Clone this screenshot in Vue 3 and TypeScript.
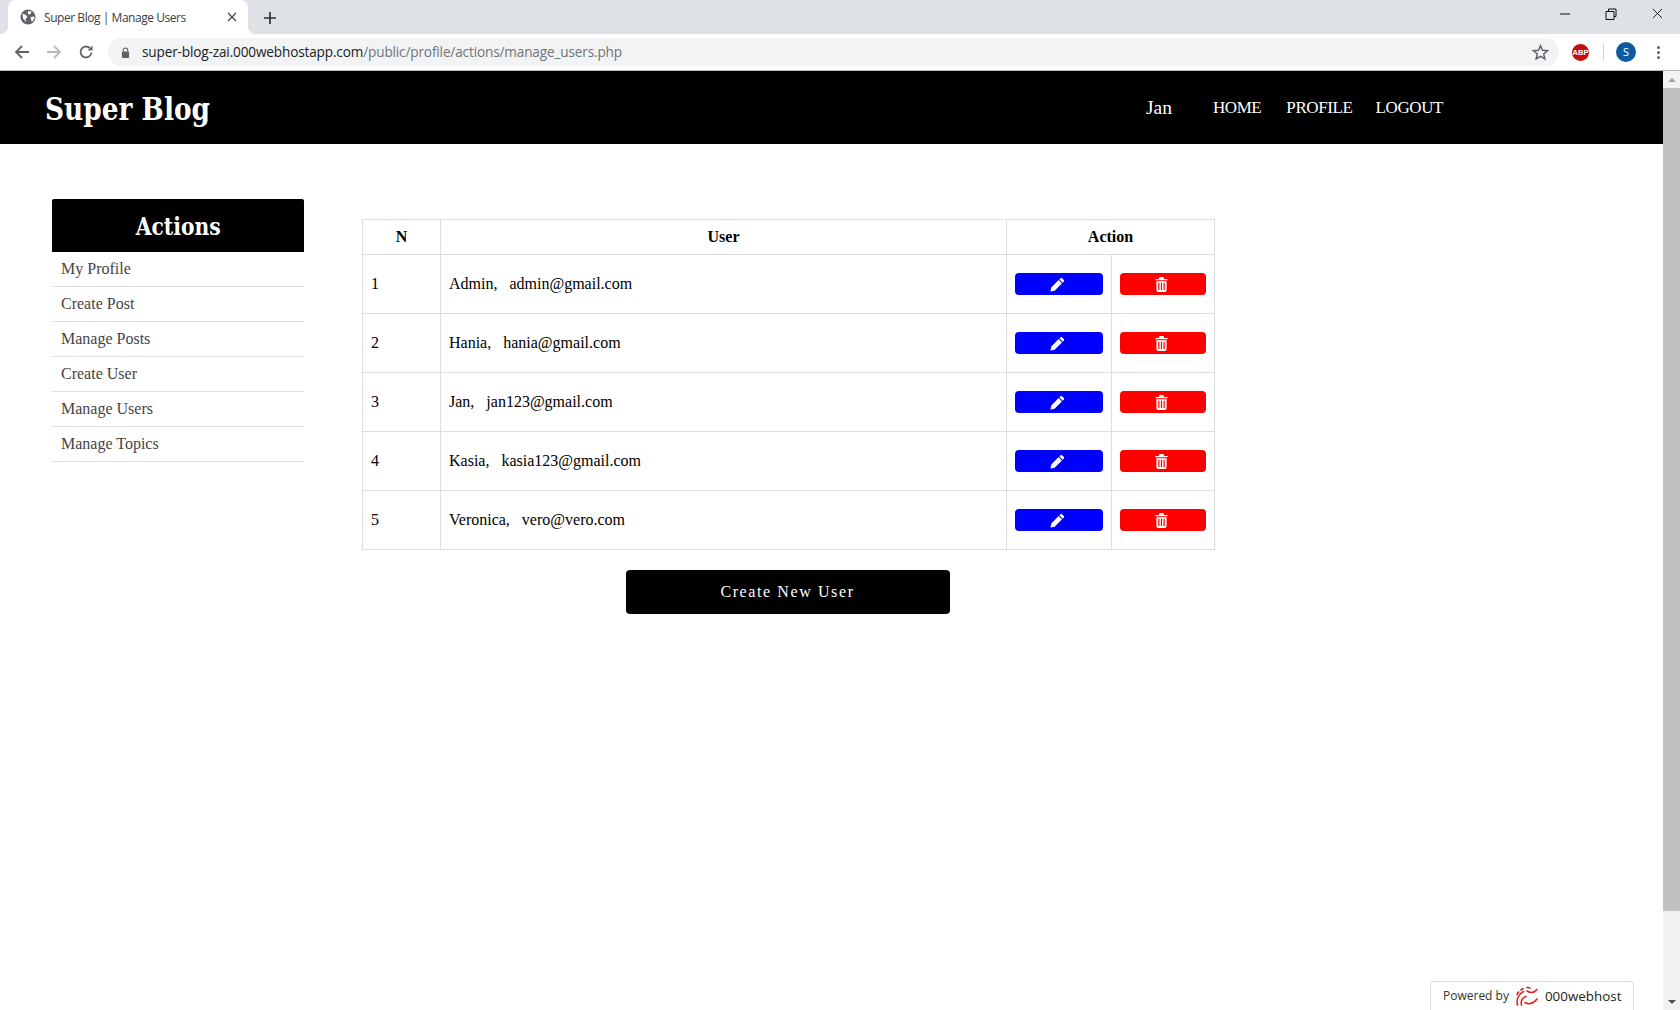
<script setup lang="ts">
interface UserRow { id: number; name: string; email: string }
const users: UserRow[] = [
  { id: 1, name: 'Admin', email: 'admin@gmail.com' },
  { id: 2, name: 'Hania', email: 'hania@gmail.com' },
  { id: 3, name: 'Jan', email: 'jan123@gmail.com' },
  { id: 4, name: 'Kasia', email: 'kasia123@gmail.com' },
  { id: 5, name: 'Veronica', email: 'vero@vero.com' },
]
const actions: string[] = ['My Profile', 'Create Post', 'Manage Posts', 'Create User', 'Manage Users', 'Manage Topics']
</script>

<template>
  <div class="window">
    <div class="tabstrip">
      <div class="tab">
        <svg class="favicon" viewBox="0 0 16 16"><circle cx="8" cy="8" r="7.500" fill="#5f6368"/><path d="M2.500 4.500l3.500 1.500 1.500 2.500-2 1 .5 3.500-3-3.500zM8 2l3.500.5-1 2.500-2.500.5zM10.500 8l3.500-.5.5 2-2.500 3.500-1-2.500z" fill="#fff"/></svg>
        <span class="tab-title">Super Blog | Manage Users</span>
        <svg class="tab-close" viewBox="0 0 10 10"><path d="M1 1l8 8M9 1l-8 8" stroke="#45474a" stroke-width="1.300" fill="none"/></svg>
      </div>
      <svg class="new-tab" viewBox="0 0 12 12"><path d="M6 0v12M0 6h12" stroke="#303236" stroke-width="1.700" fill="none"/></svg>
      <div class="window-controls">
        <svg viewBox="0 0 12 12"><path d="M1 6h10" stroke="#111" stroke-width="1" fill="none"/></svg>
        <svg viewBox="0 0 12 12"><path d="M3.500 3V1h7.500v7.500H9M1 3.500h8v8H1z" stroke="#111" stroke-width="1" fill="none"/></svg>
        <svg viewBox="0 0 12 12"><path d="M1 1l10 10M11 1L1 11" stroke="#111" stroke-width="1" fill="none"/></svg>
      </div>
    </div>
    <div class="toolbar">
      <svg class="nav-icon" viewBox="0 0 16 16"><path d="M15 8H2M8 2L2 8l6 6" stroke="#5f6368" stroke-width="1.800" fill="none"/></svg>
      <svg class="nav-icon" viewBox="0 0 16 16"><path d="M1 8h13M8 2l6 6-6 6" stroke="#b5b7ba" stroke-width="1.800" fill="none"/></svg>
      <svg class="nav-icon" viewBox="0 0 16 16"><path d="M13.500 8.500A5.500 5.500 0 1 1 11.800 4" stroke="#5f6368" stroke-width="1.800" fill="none"/><path d="M14.500 1.500v5h-5z" fill="#5f6368"/></svg>
      <div class="omnibox">
        <svg class="lock" viewBox="0 0 10 12"><path d="M2.500 5V3.500a2.500 2.500 0 0 1 5 0V5" stroke="#5f6368" stroke-width="1.200" fill="none"/><rect x="1" y="5" width="8" height="7" rx="1" fill="#5f6368"/></svg>
        <span class="url"><span class="url-host">super-blog-zai.000webhostapp.com</span>/public/profile/actions/manage_users.php</span>
        <svg class="star" viewBox="0 0 16 16"><path d="M8 1.600l1.900 4.300 4.700.4-3.600 3.100 1.100 4.600L8 11.600l-4.100 2.400 1.100-4.600-3.600-3.100 4.700-.4z" stroke="#5f6368" stroke-width="1.400" fill="none"/></svg>
      </div>
      <div class="abp">ABP</div>
      <div class="tool-sep"></div>
      <div class="avatar">S</div>
      <div class="menu-dots"><i></i><i></i><i></i></div>
    </div>
    <div class="viewport">
      <div class="page">
        <header class="site-header">
          <h1 class="logo">Super Blog</h1>
          <nav class="site-nav">
            <a class="nav-user">Jan</a>
            <a class="nav-home">HOME</a>
            <a>PROFILE</a>
            <a>LOGOUT</a>
          </nav>
        </header>
        <div class="content">
          <aside class="sidebar">
            <h2 class="sidebar-title"><span>Actions</span></h2>
            <a v-for="a in actions" :key="a" class="side-link">{{ a }}</a>
          </aside>
          <main class="main">
            <table class="users">
              <colgroup>
                <col class="col-n" />
                <col class="col-user" />
                <col class="col-edit" />
                <col class="col-del" />
              </colgroup>
              <thead>
                <tr>
                  <th>N</th>
                  <th>User</th>
                  <th colspan="2">Action</th>
                </tr>
              </thead>
              <tbody>
                <tr v-for="u in users" :key="u.id">
                  <td>{{ u.id }}</td>
                  <td>{{ u.name }}, &nbsp; {{ u.email }}</td>
                  <td>
                    <a class="act edit">
                      <svg class="pencil" viewBox="0 0 16 16"><path d="M11.300 1.200a1 1 0 0 1 1.400 0l2.100 2.100a1 1 0 0 1 0 1.400l-1.300 1.300-3.500-3.500zM9.200 3.300l3.500 3.500-7.800 7.800-4 .9-.4-.4.900-4z" fill="#fff"/></svg>
                    </a>
                  </td>
                  <td>
                    <a class="act del">
                      <svg class="trash" viewBox="0 0 14 16"><path fill-rule="evenodd" d="M5 0h4l1 2h3.500v1.500H.5V2H4zM1.500 4.500h11V14a2 2 0 0 1-2 2h-7a2 2 0 0 1-2-2zM3.500 6v8h1.300V6zM6.350 6v8h1.300V6zM9.200 6v8h1.300V6z" fill="#fff"/></svg>
                    </a>
                  </td>
                </tr>
              </tbody>
            </table>
            <a class="create-btn">Create New User</a>
          </main>
        </div>
        <div class="powered">
          <span>Powered by</span>
          <svg class="wh-logo" viewBox="0 0 24 20"><path d="M2.500 19C1 13 4 8 8.500 5.500M6.500 19c-1-4 1-7.500 4.500-8.500M10 16.500c3.500 2.500 9 1 12-3.500M12 5c3 2 7 2 10-1.500M12 1.500l3 .5M8 2.500L6 4M3.500 6L2 8.500" stroke="#d9261c" stroke-width="1.600" fill="none" stroke-linecap="round"/></svg>
          <span class="wh-name">000webhost</span>
        </div>
      </div>
      <div class="scrollbar">
        <div class="sb-btn"><span class="tri-up"></span></div>
        <div class="sb-track"><div class="sb-thumb"></div></div>
        <div class="sb-btn"><span class="tri-down"></span></div>
      </div>
    </div>
  </div>
</template>

<style>
html, body { margin: 0; padding: 0; overflow: hidden; background: #fff; }
</style>

<style scoped>
.window { width: 1680px; height: 1010px; display: flex; flex-direction: column; overflow: hidden; background: #fff; font-family: "Liberation Serif", serif; }

.tabstrip { height: 34px; background: #dee1e6; display: flex; align-items: flex-end; padding-left: 8px; box-sizing: border-box; flex: none; }
.tab { position: relative; width: 240px; height: 34px; background: #fff; border-radius: 8px 8px 0 0; display: flex; align-items: center; padding: 0 10px 0 12px; box-sizing: border-box; }
.tab::before, .tab::after { content: ""; position: absolute; bottom: 0; width: 8px; height: 8px; }
.tab::before { left: -8px; background: radial-gradient(circle at 0 0, transparent 8px, #fff 8px); }
.tab::after { right: -8px; background: radial-gradient(circle at 100% 0, transparent 8px, #fff 8px); }
.favicon { width: 16px; height: 16px; flex: none; }
.tab-title { font: 12px "Open Sans", sans-serif; color: #3c4043; margin-left: 8px; flex: 1; white-space: nowrap; letter-spacing: -0.45px; }
.tab-close { width: 10px; height: 10px; flex: none; margin-right: 1px; }
.new-tab { width: 12px; height: 12px; margin: 0 0 10px 16px; flex: none; }
.window-controls { margin-left: auto; align-self: flex-start; display: flex; padding-top: 8px; }
.window-controls svg { width: 12px; height: 12px; margin-left: 34px; }
.window-controls svg:last-child { margin-right: 17px; margin-left: 35px; width: 11px; height: 11px; }

.toolbar { height: 37px; background: #fff; border-bottom: 1px solid #b8b9bb; box-sizing: border-box; display: flex; align-items: center; padding: 0 0 0 14px; flex: none; }
.nav-icon { width: 16px; height: 16px; margin-right: 16px; flex: none; }
.omnibox { width: 1451px; height: 28px; margin-left: -2px; background: #f1f3f4; border-radius: 14px; display: flex; align-items: center; padding: 0 10px 0 13px; box-sizing: border-box; flex: none; }
.lock { width: 9px; height: 11px; flex: none; }
.url { font: 13.600px "Open Sans", sans-serif; color: #70757a; margin: -1px 0 0 12px; flex: 1; white-space: nowrap; letter-spacing: -0.15px; }
.url-host { color: #202124; }
.star { width: 17px; height: 17px; flex: none; }
.abp { width: 17px; height: 17px; margin-left: 13px; background: #c70d0d; border-radius: 50%; color: #fff; font: bold 7.500px/17px "Liberation Sans", sans-serif; text-align: center; flex: none; }
.tool-sep { width: 1px; height: 18px; background: #d0d2d5; margin-left: 14px; flex: none; }
.avatar { width: 20px; height: 20px; margin-left: 12px; border-radius: 50%; background: #0b5c9e; color: #fff; font: 11px/20px "Open Sans", sans-serif; text-align: center; flex: none; }
.menu-dots { display: flex; flex-direction: column; gap: 2px; margin-left: 21px; flex: none; }
.menu-dots i { width: 3px; height: 3px; border-radius: 50%; background: #5f6368; display: block; }

.viewport { flex: 1; display: flex; min-height: 0; }
.page { flex: 1; min-width: 0; position: relative; background: #fff; }
.scrollbar { width: 17px; background: #f1f1f1; display: flex; flex-direction: column; flex: none; }
.sb-btn { height: 17px; display: flex; align-items: center; justify-content: center; flex: none; }
.tri-up { border: 4px solid transparent; border-top: 0; border-bottom: 4px solid #a3a3a3; }
.tri-down { border: 4px solid transparent; border-bottom: 0; border-top: 4px solid #505050; }
.sb-track { flex: 1; }
.sb-thumb { height: 823px; background: #c1c1c1; }

.site-header { height: 73px; background: #000; display: flex; align-items: center; justify-content: space-between; color: #fff; box-sizing: border-box; padding: 0 0 0 45px; }
.logo { margin: 2px 0 0; font: bold 32px "DejaVu Serif", serif; font-stretch: condensed; color: #fff; transform: scaleX(0.917); transform-origin: left center; }
.site-nav { display: flex; align-items: center; margin-right: 220px; font-size: 17px; letter-spacing: -0.4px; margin-top: 1px; }
.site-nav a { margin-left: 23px; color: #fff; }
.site-nav .nav-user { margin-right: 18px; font-size: 19.500px; letter-spacing: 0; }
.site-nav .nav-home { margin-right: 2px; }

.content { display: flex; align-items: flex-start; padding: 55px 0 0 52px; }
.sidebar { width: 252px; flex: none; display: flex; flex-direction: column; }
.sidebar-title { margin: 0; height: 53px; background: #000; color: #fff; border-radius: 2px 2px 0 0; text-align: center; font: bold 24px/55px "DejaVu Serif", serif; font-stretch: condensed; }
.sidebar-title span { display: inline-block; transform: scaleX(0.94); }
.side-link { height: 35px; box-sizing: border-box; border-bottom: 1px solid #e0e0e0; padding-left: 9px; font-size: 16px; line-height: 34px; color: #444; }

.main { margin: 20px 0 0 58px; display: flex; flex-direction: column; align-items: center; width: 853px; }
.users { border-collapse: collapse; width: 853px; font-size: 16px; color: #000; table-layout: fixed; }
.users th, .users td { border: 1px solid #ddd; text-align: left; box-sizing: border-box; }
.users th { height: 35px; text-align: center; padding: 0; }
.users td { height: 59px; padding: 0 8px; }
.col-n { width: 78px; }
.col-user { width: 566px; }
.col-edit { width: 105px; }
.col-del { width: 103px; }
.act { height: 22px; border-radius: 4px; display: flex; align-items: center; justify-content: center; padding-right: 3px; box-sizing: border-box; }
.pencil { width: 15px; height: 15px; }
.trash { width: 13px; height: 15px; }
.edit { background: #00f; width: 88px; }
.del { background: #f00; width: 86px; }
.create-btn { margin: 20px 2px 0 0; width: 324px; height: 44px; background: #000; color: #fff; border-radius: 4px; display: flex; align-items: center; justify-content: center; font-size: 16px; letter-spacing: 1.600px; }

.powered { position: absolute; right: 29px; bottom: 0; height: 29px; width: 204px; background: #fff; border: 1px solid #dcdcdc; border-bottom: 0; border-radius: 5px 5px 0 0; box-sizing: border-box; display: flex; align-items: center; padding: 0 0 1px 12px; font: 12px "Open Sans", sans-serif; color: #333; white-space: nowrap; }
.wh-logo { width: 24px; height: 20px; margin-left: 6px; flex: none; }
.wh-name { margin-left: 6px; font-size: 13.400px; color: #222; }
</style>
